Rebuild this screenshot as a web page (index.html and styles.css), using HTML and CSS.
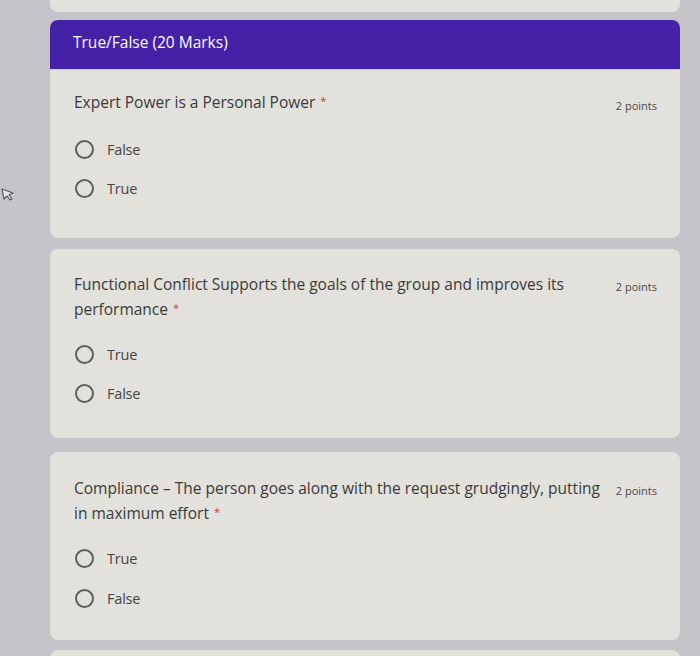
FILE: index.html
```html
<!DOCTYPE html>
<html>
<head>
<meta charset="utf-8">
<link rel="stylesheet" href="styles.css">
</head>
<body>
<div class="page">
  <div class="card card-stub"></div>

  <div class="card first-card">
    <div class="section-head">True/False (20 Marks)</div>
    <div class="card-body first">
      <div class="q-row">
        <div class="q-text">Expert Power is a Personal Power<span class="req">*</span></div>
        <div class="pts pts-low">2 points</div>
      </div>
      <div class="options">
        <div class="opt"><span class="radio"></span><span class="opt-label">False</span></div>
        <div class="opt"><span class="radio"></span><span class="opt-label">True</span></div>
      </div>
    </div>
  </div>

  <div class="card">
    <div class="card-body">
      <div class="q-row">
        <div class="q-text">Functional Conflict Supports the goals of the group and improves its performance<span class="req">*</span></div>
        <div class="pts">2 points</div>
      </div>
      <div class="options">
        <div class="opt"><span class="radio"></span><span class="opt-label">True</span></div>
        <div class="opt"><span class="radio"></span><span class="opt-label">False</span></div>
      </div>
    </div>
  </div>

  <div class="card last">
    <div class="card-body">
      <div class="q-row">
        <div class="q-text">Compliance – The person goes along with the request grudgingly, putting in maximum effort<span class="req">*</span></div>
        <div class="pts">2 points</div>
      </div>
      <div class="options">
        <div class="opt"><span class="radio"></span><span class="opt-label">True</span></div>
        <div class="opt"><span class="radio"></span><span class="opt-label">False</span></div>
      </div>
    </div>
  </div>

  <div class="card card-tail"></div>
</div>
<svg class="cursor" width="16" height="16" viewBox="0 0 16 16"><path d="M2 3 L13 7 L9 9 L12 13 L10 14 L7 10 L4 13 Z" fill="#e8e6ea" stroke="#555" stroke-width="1.2" stroke-linejoin="round"/></svg>
</body>
</html>
```
FILE: styles.css
```css
html, body {
  margin: 0;
  padding: 0;
}
body {
  background: #c6c3c9;
  font-family: "Open Sans", Roboto, "Liberation Sans", sans-serif;
  color: #3b3b3b;
  position: relative;
  height: 656px;
  overflow: hidden;
}
.page {
  width: 630px;
  margin-left: 50px;
  display: flex;
  flex-direction: column;
  gap: 12px;
}
.card {
  background: #e2e1dc;
  border-radius: 8px;
  overflow: hidden;
}
.card-stub {
  height: 12px;
  border-radius: 0 0 8px 8px;
  margin-bottom: -4px;
}
.first-card {
  margin-bottom: -1px;
}
.last {
  margin-top: 2px;
}
.card-tail {
  height: 20px;
  margin-top: -2px;
}
.section-head {
  background: #4521a8;
  color: #fff;
  font-size: 15.5px;
  line-height: 22px;
  height: 50px;
  box-sizing: border-box;
  padding: 11px 23px;
  border-bottom: 1px solid #cfc9e6;
}
.card-body {
  padding: 24px 23px 25px 24px;
}
.card-body.first {
  padding-top: 19px;
  padding-bottom: 30px;
}
.last .card-body {
  padding-top: 25px;
  padding-bottom: 22px;
}
.q-row {
  display: flex;
  align-items: flex-start;
  gap: 6px;
}
.q-text {
  flex: 1;
  font-size: 15.5px;
  line-height: 23px;
  color: #3a3a3a;
}
.req {
  color: #c0394a;
  font-size: 11px;
  margin-left: 5px;
  vertical-align: 3px;
}
.pts {
  flex-shrink: 0;
  font-size: 11px;
  line-height: 23px;
  color: #4a4a4a;
  padding-top: 2px;
}
.pts-low {
  padding-top: 5px;
}
.options {
  margin-top: 14px;
  display: flex;
  flex-direction: column;
}
.first .options {
  margin-top: 13px;
}
.last .options {
  margin-top: 13px;
}
.opt {
  height: 39px;
  display: flex;
  align-items: center;
}
.last .opt {
  height: 40px;
}
.radio {
  width: 19px;
  height: 19px;
  box-sizing: border-box;
  border: 2px solid #5e5e5e;
  border-radius: 50%;
  margin-left: 1px;
}
.opt-label {
  margin-left: 13px;
  font-size: 14.5px;
  color: #454545;
  letter-spacing: -0.2px;
}
.cursor {
  position: absolute;
  left: 0;
  top: 186px;
}
```
